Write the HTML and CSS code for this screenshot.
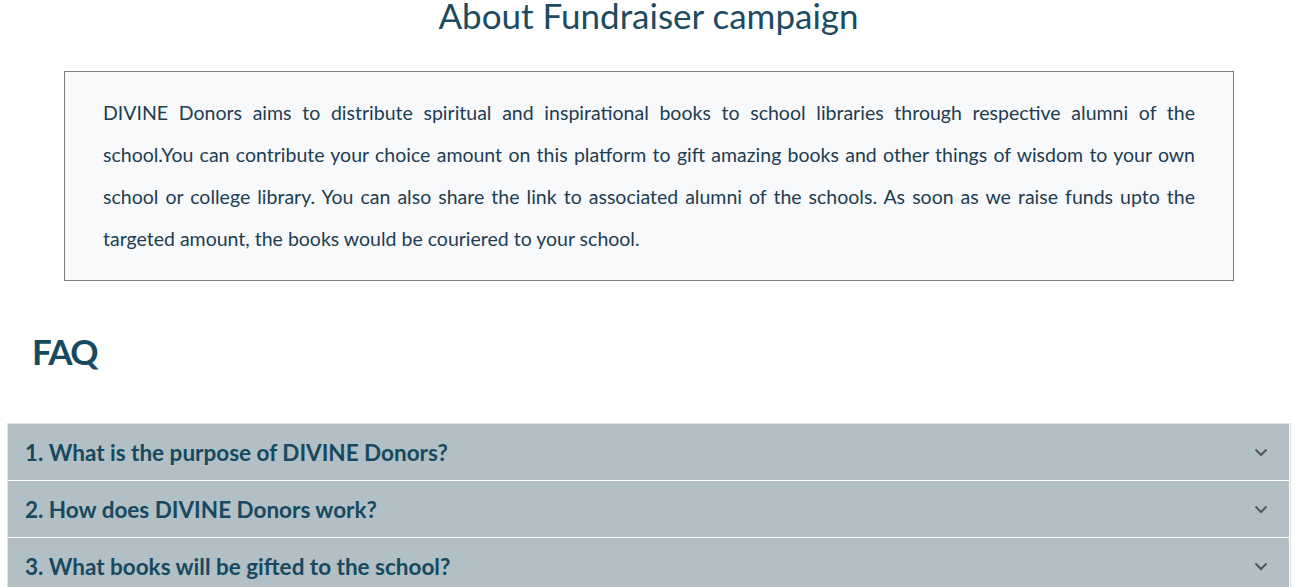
FILE: index.html
```html
<!DOCTYPE html>
<html lang="en">
<head>
<meta charset="utf-8">
<title>About Fundraiser campaign</title>
<link rel="stylesheet" href="styles.css">
</head>
<body>
<div class="page">
  <h1 class="title">About Fundraiser campaign</h1>
  <div class="about-box">
    <p class="about-text">
      <span class="line">DIVINE Donors aims to distribute spiritual and inspirational books to school libraries through respective alumni of the</span>
      <span class="line">school.You can contribute your choice amount on this platform to gift amazing books and other things of wisdom to your own</span>
      <span class="line">school or college library. You can also share the link to associated alumni of the schools. As soon as we raise funds upto the</span>
      <span class="line line-last">targeted amount, the books would be couriered to your school.</span>
    </p>
  </div>
  <h2 class="faq-title">FAQ</h2>
  <div class="accordion">
    <div class="acc-item">
      <span class="acc-q">1. What is the purpose of DIVINE Donors?</span>
      <svg class="chev" width="14" height="9" viewBox="0 0 14 9"><path d="M1.5 1.5 L7 7 L12.5 1.5" fill="none" stroke="#555" stroke-width="2"/></svg>
    </div>
    <div class="acc-item">
      <span class="acc-q">2. How does DIVINE Donors work?</span>
      <svg class="chev" width="14" height="9" viewBox="0 0 14 9"><path d="M1.5 1.5 L7 7 L12.5 1.5" fill="none" stroke="#555" stroke-width="2"/></svg>
    </div>
    <div class="acc-item">
      <span class="acc-q">3. What books will be gifted to the school?</span>
      <svg class="chev" width="14" height="9" viewBox="0 0 14 9"><path d="M1.5 1.5 L7 7 L12.5 1.5" fill="none" stroke="#555" stroke-width="2"/></svg>
    </div>
  </div>
</div>
</body>
</html>
```
FILE: styles.css
```css
html, body {
  margin: 0;
  padding: 0;
  background: #ffffff;
}
body {
  font-family: Lato, "PT Sans", "Noto Sans", sans-serif;
  overflow: hidden;
}
.page {
  width: 1297px;
}
.title {
  margin: 0 0 41px;
  padding-top: 0;
  font-size: 35px;
  line-height: 30px;
  font-weight: 400;
  text-align: center;
  color: #1d4b62;
}
.about-box {
  margin: 0 63px 0 64px;
  border: 1px solid #7a7a7a;
  background: #f8f9fa;
  padding: 20px 38px 20px 38px;
}
.about-text {
  margin: 0;
  font-size: 19.5px;
  line-height: 42px;
  color: #1d3d52;
}
.line {
  display: block;
  text-align: justify;
  text-align-last: justify;
}
.line-last {
  text-align: left;
  text-align-last: left;
}
.faq-title {
  margin: 50px 0 52px 32px;
  font-size: 35px;
  line-height: 40px;
  font-weight: 700;
  letter-spacing: -1.5px;
  color: #174a60;
}
.accordion {
  width: 1284px;
  margin-left: 7px;
  border: 1px solid #dee2e6;
  box-sizing: border-box;
  background: #ffffff;
  display: flex;
  flex-direction: column;
  gap: 1px;
}
.acc-item {
  height: 56px;
  background: #b2bfc5;
  margin-right: 1px;
  display: flex;
  align-items: center;
  justify-content: space-between;
  padding: 0 21px 0 17px;
}
.acc-q {
  font-size: 22.5px;
  font-weight: 700;
  color: #174a60;
}
.chev {
  display: block;
}
```
